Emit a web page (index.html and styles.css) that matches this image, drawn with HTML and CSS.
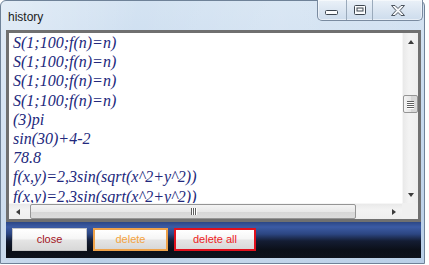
FILE: index.html
```html
<!DOCTYPE html>
<html>
<head>
<meta charset="utf-8">
<title>history</title>
<link rel="stylesheet" href="styles.css">
</head>
<body>
<div class="window">
  <div class="titlebar">
    <span class="title">history</span>
    <div class="caption">
      <div class="cbtn cbtn-min">
        <svg width="14" height="6" viewBox="0 0 14 6"><rect x="0.5" y="0.5" width="12" height="4" rx="1" fill="#fbfcfd" stroke="#3d4650"/></svg>
      </div>
      <div class="cbtn cbtn-max">
        <svg width="12" height="10" viewBox="0 0 12 10"><rect x="0.5" y="0.5" width="11" height="9" rx="1" fill="#fbfcfd" stroke="#3d4650"/><rect x="3" y="3" width="6" height="3" fill="none" stroke="#3d4650"/></svg>
      </div>
      <div class="cbtn cbtn-close">
        <svg width="14" height="11" viewBox="0 0 14 11"><polygon points="0.5,0.5 4,0.5 7,3.5 10,0.5 13.5,0.5 9,5.5 13.5,10.5 10,10.5 7,7.5 4,10.5 0.5,10.5 5,5.5" fill="#f6f8fa" stroke="#4a535d" stroke-linejoin="round"/></svg>
      </div>
    </div>
  </div>
  <div class="client">
    <div class="textbox">
      <div class="text">S(1;100;f(n)=n)
S(1;100;f(n)=n)
S(1;100;f(n)=n)
S(1;100;f(n)=n)
(3)pi
sin(30)+4-2
78.8
f(x,y)=2,3sin(sqrt(x^2+y^2))
f(x,y)=2,3sin(sqrt(x^2+y^2))</div>
      <div class="vscroll">
        <div class="arrow-box"><span class="tri tri-up"></span></div>
        <div class="vtrack"><div class="vthumb"><span class="grip-h"></span><span class="grip-h"></span><span class="grip-h"></span><span class="grip-h"></span></div></div>
        <div class="arrow-box"><span class="tri tri-down"></span></div>
      </div>
      <div class="hscroll">
        <div class="arrow-box-h"><span class="tri tri-left"></span></div>
        <div class="htrack"><div class="hthumb"><span class="grip-v"></span><span class="grip-v"></span><span class="grip-v"></span></div></div>
        <div class="arrow-box-h"><span class="tri tri-right"></span></div>
      </div>
      <div class="corner"></div>
    </div>
    <div class="panel">
      <button class="btn btn-close">close</button>
      <button class="btn btn-delete">delete</button>
      <button class="btn btn-deleteall">delete all</button>
    </div>
  </div>
</div>
</body>
</html>
```

FILE: styles.css
```css
html, body {
  margin: 0;
  padding: 0;
  background: #ffffff;
  width: 429px;
  height: 265px;
  overflow: hidden;
}

.window {
  box-sizing: border-box;
  width: 425px;
  height: 264px;
  border: 1px solid #6f8298;
  border-radius: 6px 6px 0 0;
  padding: 0 3px 5px 5px;
  display: flex;
  flex-direction: column;
  background:
    linear-gradient(100deg, rgba(255,255,255,0.35) 0%, rgba(255,255,255,0) 30%, rgba(255,255,255,0.15) 60%, rgba(255,255,255,0) 100%),
    linear-gradient(180deg, #d4e3f2 0%, #c6d9ee 40%, #b9cfe7 100%);
}

.titlebar {
  height: 29px;
  display: flex;
  justify-content: space-between;
  align-items: flex-start;
  flex: none;
}

.title {
  font-family: "Segoe UI", "Liberation Sans", Arial, sans-serif;
  font-size: 12px;
  color: #1b1b1b;
  margin: 9px 0 0 2px;
  line-height: 14px;
}

.caption {
  display: flex;
  margin-top: -1px;
  margin-right: -2px;
  border: 1px solid #7a8ba0;
  border-top: none;
  border-radius: 0 0 5px 5px;
  overflow: hidden;
  background: linear-gradient(180deg, #eaf1f8 0%, #dbe6f2 50%, #cddcec 100%);
  box-shadow: inset 0 0 0 1px rgba(255,255,255,0.5);
}

.cbtn {
  height: 20px;
  display: flex;
  align-items: center;
  justify-content: center;
  box-sizing: border-box;
}

.cbtn-min {
  width: 29px;
  border-right: 1px solid #9aaabb;
  padding-top: 5px;
}

.cbtn-max {
  width: 26px;
  border-right: 1px solid #9aaabb;
}

.cbtn-close {
  width: 49px;
}

.client {
  flex: 1;
  display: flex;
  flex-direction: column;
}

.textbox {
  height: 192px;
  box-sizing: border-box;
  border: 3px solid #707070;
  display: grid;
  grid-template-columns: 1fr 16px;
  grid-template-rows: 170px 16px;
  background: #ffffff;
  flex: none;
}

.text {
  font-family: "Liberation Serif", "Times New Roman", serif;
  font-style: italic;
  font-size: 16px;
  line-height: 19.2px;
  color: #22287c;
  white-space: pre;
  overflow: hidden;
  padding-left: 4px;
  padding-top: 0;
}

.vscroll {
  display: flex;
  flex-direction: column;
  background: linear-gradient(90deg, #e9e9e9, #f3f3f3 40%, #eeeeee);
  border-left: 1px solid #f6f6f6;
}

.arrow-box {
  height: 17px;
  display: flex;
  align-items: center;
  justify-content: center;
  flex: none;
}

.vtrack {
  flex: 1;
}

.vthumb {
  margin: 45px 0 0 0;
  height: 18px;
  box-sizing: border-box;
  border: 1px solid #959595;
  border-radius: 2px;
  background: linear-gradient(90deg, #f4f4f4 0%, #e6e6e6 50%, #d4d4d4 51%, #dadada 100%);
  display: flex;
  flex-direction: column;
  align-items: center;
  justify-content: center;
  gap: 1px;
}

.grip-h {
  width: 7px;
  height: 1px;
  background: #5f5f5f;
  box-shadow: 0 1px 0 #ffffff;
}

.hscroll {
  display: flex;
  background: linear-gradient(180deg, #e9e9e9, #f3f3f3 40%, #eeeeee);
  border-top: 1px solid #f6f6f6;
}

.arrow-box-h {
  width: 17px;
  display: flex;
  align-items: center;
  justify-content: center;
  flex: none;
}

.htrack {
  flex: 1;
  padding-left: 4px;
  display: flex;
  align-items: stretch;
}

.hthumb {
  width: 326px;
  box-sizing: border-box;
  border: 1px solid #959595;
  border-radius: 2px;
  background: linear-gradient(180deg, #f4f4f4 0%, #e8e8e8 50%, #d6d6d6 51%, #dcdcdc 100%);
  display: flex;
  align-items: center;
  justify-content: center;
  gap: 1px;
}

.grip-v {
  width: 1px;
  height: 7px;
  background: #5f5f5f;
  box-shadow: 1px 0 0 #ffffff;
}

.corner {
  background: #f0f0f0;
}

.tri {
  width: 0;
  height: 0;
  display: block;
}

.tri-up {
  border-left: 3.5px solid transparent;
  border-right: 3.5px solid transparent;
  border-bottom: 4px solid #3c3c3c;
}

.tri-down {
  border-left: 3.5px solid transparent;
  border-right: 3.5px solid transparent;
  border-top: 4px solid #3c3c3c;
}

.tri-left {
  border-top: 3.5px solid transparent;
  border-bottom: 3.5px solid transparent;
  border-right: 4px solid #3c3c3c;
}

.tri-right {
  border-top: 3.5px solid transparent;
  border-bottom: 3.5px solid transparent;
  border-left: 4px solid #3c3c3c;
}

.panel {
  flex: 1;
  display: flex;
  align-items: flex-start;
  gap: 6px;
  padding: 6px 0 0 6px;
  background: linear-gradient(180deg, #2c4786 0px, #3c5ba4 5px, #2c4682 12px, #141d33 19px, #0b0f18 28px, #0e121b 36px);
}

.btn {
  height: 23px;
  box-sizing: border-box;
  margin: 0;
  padding: 0;
  font-family: "Segoe UI", "Liberation Sans", Arial, sans-serif;
  font-size: 11px;
  line-height: 19px;
  text-align: center;
  background: linear-gradient(180deg, #ffffff 0%, #f6f6f6 45%, #e4e4e4 55%, #d8d8d8 100%);
  border-radius: 0;
  cursor: default;
}

.btn-close {
  width: 75px;
  border: 1px solid #c6c6c6;
  color: #a3141c;
}

.btn-delete {
  width: 75px;
  border: 2px solid #eea24a;
  color: #f3a23f;
}

.btn-deleteall {
  width: 82px;
  border: 2px solid #e0101c;
  color: #ec1c24;
}
```
